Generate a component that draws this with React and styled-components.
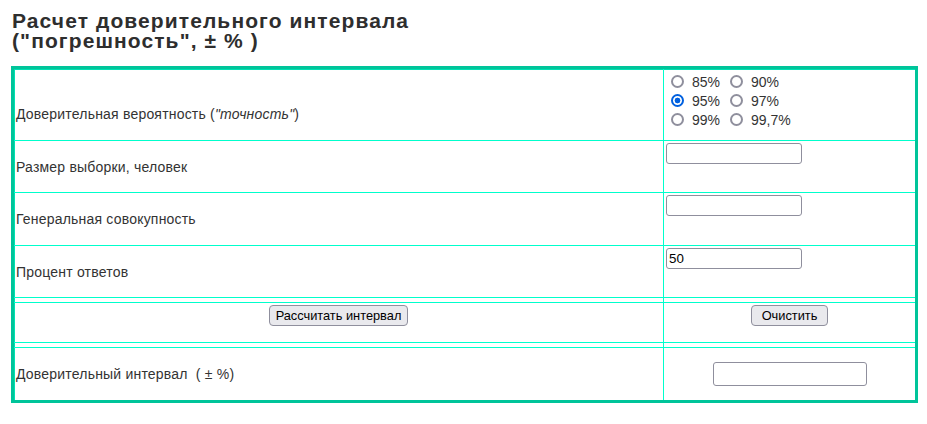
import React, { useState } from 'react';
import styled, { createGlobalStyle } from 'styled-components';

const GlobalStyle = createGlobalStyle`
    body {
        margin: 0;
        background: #ffffff;
        font-family: "Liberation Sans", Arial, sans-serif;
        color: #333333;
    }
`;

const Page = styled.div`
    padding: 11px 0 0 11px;
`;

const Title = styled.h2`
    margin: 0 0 15px 1px;
    font-size: 21px;
    line-height: 20px;
    letter-spacing: 1.1px;
    font-weight: bold;
    color: #2e2e2e;
`;

const Board = styled.div`
    width: 907px;
    box-sizing: border-box;
    border: 3px solid #00c49a;
    box-shadow: inset 1px 1px 0 #00e2b2;
`;

const Row = styled.div`
    display: grid;
    grid-template-columns: 650px 1fr;
    height: ${props => props.h}px;
    box-sizing: border-box;
    border-bottom: ${props => props.last ? 'none' : '1px solid #00ffcc'};
`;

const Cell = styled.div`
    display: flex;
    box-sizing: border-box;
    align-items: ${props => props.top ? 'flex-start' : 'center'};
    justify-content: ${props => props.center ? 'center' : 'flex-start'};
    padding: ${props => props.pad || '0 2px'};
    border-right: ${props => props.side ? '1px solid #00ffcc' : 'none'};
    font-size: 14px;
    letter-spacing: 0.2px;
    color: #333333;
`;

const Radios = styled.div`
    display: grid;
    grid-template-columns: auto auto;
    column-gap: 10px;
    padding-left: 5px;
`;

const Choice = styled.label`
    display: flex;
    align-items: center;
    gap: 8px;
    height: 19px;
    font-size: 14px;
    letter-spacing: 0;
    color: #333333;
`;

const Radio = styled.input`
    appearance: none;
    margin: 0;
    width: 13px;
    height: 13px;
    box-sizing: border-box;
    border: 2px solid #8f8f9d;
    border-radius: 50%;
    background: #ffffff;
    &:checked {
        border-color: #0060df;
        background: radial-gradient(circle, #0060df 0 2.6px, #ffffff 3.2px);
    }
`;

const Field = styled.input`
    box-sizing: border-box;
    width: ${props => props.w}px;
    height: ${props => props.h}px;
    margin: 0;
    padding: 1px 2px;
    border: 1px solid #8f8f9d;
    border-radius: 3px;
    font-family: "Liberation Sans", Arial, sans-serif;
    font-size: 13.33px;
    letter-spacing: 0;
    color: #000000;
    background: #ffffff;
`;

const Button = styled.button`
    height: 21px;
    margin: 0;
    padding: 0 ${props => props.px}px;
    border: 1px solid #8f8f9d;
    border-radius: 4px;
    background: #e9e9ed;
    font-family: "Liberation Sans", Arial, sans-serif;
    font-size: 12.8px;
    letter-spacing: 0;
    color: #000000;
`;

const levels = ['85%', '90%', '95%', '97%', '99%', '99,7%'];

export default function App() {
    const [level, setLevel] = useState('95%');

    return (
        <>
            <GlobalStyle />
            <Page>
                <Title>
                    Расчет доверительного интервала<br />
                    ("погрешность", ± % )
                </Title>
                <Board>
                    <Row h={72}>
                        <Cell side pad="18px 2px 0">
                            <span>Доверительная вероятность (<i>"точность"</i>)</span>
                        </Cell>
                        <Cell top pad="3px 2px 0">
                            <Radios>
                                {levels.map(v => (
                                    <Choice key={v}>
                                        <Radio
                                            type="radio"
                                            name="level"
                                            checked={level === v}
                                            onChange={() => setLevel(v)}
                                        />
                                        {v}
                                    </Choice>
                                ))}
                            </Radios>
                        </Cell>
                    </Row>
                    <Row h={52}>
                        <Cell side>Размер выборки, человек</Cell>
                        <Cell top pad="2px 2px 0"><Field w={136} h={21} /></Cell>
                    </Row>
                    <Row h={53}>
                        <Cell side>Генеральная совокупность</Cell>
                        <Cell top pad="2px 2px 0"><Field w={136} h={21} /></Cell>
                    </Row>
                    <Row h={52}>
                        <Cell side>Процент ответов</Cell>
                        <Cell top pad="2px 2px 0"><Field w={136} h={21} defaultValue="50" /></Cell>
                    </Row>
                    <Row h={5}>
                        <Cell side />
                        <Cell />
                    </Row>
                    <Row h={40}>
                        <Cell side top center pad="2px 0 0">
                            <Button px={6}>Рассчитать интервал</Button>
                        </Cell>
                        <Cell top center pad="2px 0 0">
                            <Button px={10}>Очистить</Button>
                        </Cell>
                    </Row>
                    <Row h={5}>
                        <Cell side />
                        <Cell />
                    </Row>
                    <Row h={52} last>
                        <Cell side>Доверительный интервал&nbsp; ( ± %)</Cell>
                        <Cell center><Field w={154} h={24} readOnly /></Cell>
                    </Row>
                </Board>
            </Page>
        </>
    );
}
